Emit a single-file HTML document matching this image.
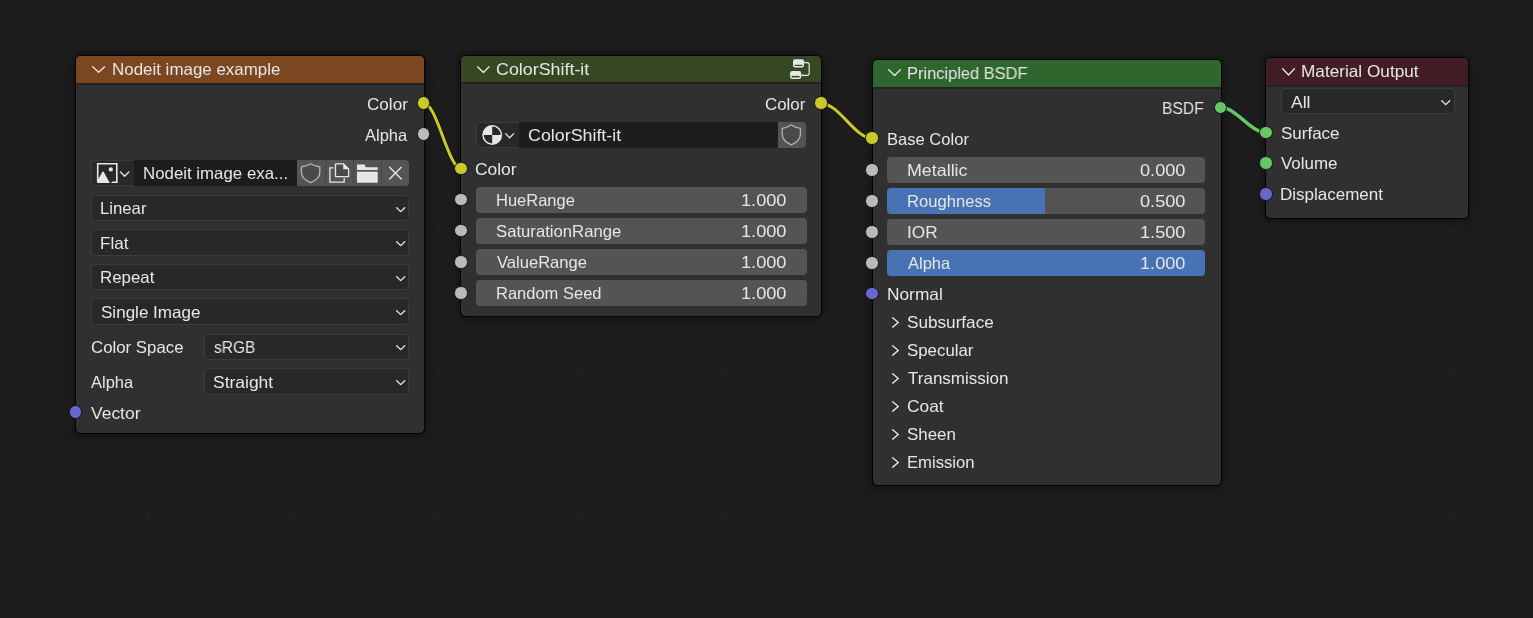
<!DOCTYPE html>
<html><head><meta charset="utf-8"><style>
html,body{margin:0;padding:0;width:1533px;height:618px;overflow:hidden;background:#1d1d1d;font-family:"Liberation Sans", sans-serif;}
.node{position:absolute;background:#303030;border-radius:4.5px;box-shadow:0 0 0 1px rgba(0,0,0,0.75),0 0 3px 1px rgba(0,0,0,0.35),0 1px 12px 3px rgba(0,0,0,0.28);overflow:hidden;}
.hdr{position:absolute;left:0;top:0;right:0;}
.sep{position:absolute;left:0;right:0;height:2px;background:#232323;}
.t{position:absolute;white-space:pre;line-height:20px;height:20px;font-size:16.5px;transform-origin:0 0;will-change:transform;}
.ic{position:absolute;overflow:visible;}
.sock{position:absolute;border-radius:50%;border:1px solid #141414;}
.bx,.dd,.sl{position:absolute;}
.dd{box-shadow:inset 0 0 0 1px #3c3c3c;}
.links{position:absolute;left:0;top:0;}
.dot{position:absolute;width:3px;height:3px;background:#232323;border-radius:1px;}
</style></head><body>
<div class="dot" style="left:147.2px;top:82.5px"></div><div class="dot" style="left:147.2px;top:226.9px"></div><div class="dot" style="left:147.2px;top:371.3px"></div><div class="dot" style="left:147.2px;top:515.7px"></div><div class="dot" style="left:291.7px;top:82.5px"></div><div class="dot" style="left:291.7px;top:226.9px"></div><div class="dot" style="left:291.7px;top:371.3px"></div><div class="dot" style="left:291.7px;top:515.7px"></div><div class="dot" style="left:436.2px;top:82.5px"></div><div class="dot" style="left:436.2px;top:226.9px"></div><div class="dot" style="left:436.2px;top:371.3px"></div><div class="dot" style="left:436.2px;top:515.7px"></div><div class="dot" style="left:580.7px;top:82.5px"></div><div class="dot" style="left:580.7px;top:226.9px"></div><div class="dot" style="left:580.7px;top:371.3px"></div><div class="dot" style="left:580.7px;top:515.7px"></div><div class="dot" style="left:725.2px;top:82.5px"></div><div class="dot" style="left:725.2px;top:226.9px"></div><div class="dot" style="left:725.2px;top:371.3px"></div><div class="dot" style="left:725.2px;top:515.7px"></div><div class="dot" style="left:869.7px;top:82.5px"></div><div class="dot" style="left:869.7px;top:226.9px"></div><div class="dot" style="left:869.7px;top:371.3px"></div><div class="dot" style="left:869.7px;top:515.7px"></div><div class="dot" style="left:1014.2px;top:82.5px"></div><div class="dot" style="left:1014.2px;top:226.9px"></div><div class="dot" style="left:1014.2px;top:371.3px"></div><div class="dot" style="left:1014.2px;top:515.7px"></div><div class="dot" style="left:1158.7px;top:82.5px"></div><div class="dot" style="left:1158.7px;top:226.9px"></div><div class="dot" style="left:1158.7px;top:371.3px"></div><div class="dot" style="left:1158.7px;top:515.7px"></div><div class="dot" style="left:1303.2px;top:82.5px"></div><div class="dot" style="left:1303.2px;top:226.9px"></div><div class="dot" style="left:1303.2px;top:371.3px"></div><div class="dot" style="left:1303.2px;top:515.7px"></div><div class="dot" style="left:1447.7px;top:82.5px"></div><div class="dot" style="left:1447.7px;top:226.9px"></div><div class="dot" style="left:1447.7px;top:371.3px"></div><div class="dot" style="left:1447.7px;top:515.7px"></div>
<div class="node" style="left:75.8px;top:55.6px;width:348.20px;height:377.80px"><div class="hdr" style="height:27.40px;background:#7b4720"></div><div class="sep" style="top:27.40px"></div></div><div class="node" style="left:461.2px;top:55.8px;width:360.10px;height:259.90px"><div class="hdr" style="height:26.60px;background:#364823"></div><div class="sep" style="top:26.60px"></div></div><div class="node" style="left:872.5px;top:59.7px;width:348.50px;height:425.30px"><div class="hdr" style="height:27.30px;background:#2e662e"></div><div class="sep" style="top:27.30px"></div></div><div class="node" style="left:1266.2px;top:57.6px;width:201.50px;height:160.60px"><div class="hdr" style="height:27.40px;background:#421d26"></div><div class="sep" style="top:27.40px"></div></div>
<svg class="links" width="1533" height="618"><path d="M424 103.4 C437.02 103.4 448.18 168.6 461.2 168.6" fill="none" stroke="#161616" stroke-width="5" stroke-linecap="round"/><path d="M424 103.4 C437.02 103.4 448.18 168.6 461.2 168.6" fill="none" stroke="#c9c92c" stroke-width="3" stroke-linecap="round"/><path d="M821.3 103.4 C839.18 103.4 854.51 138.3 872.4 138.3" fill="none" stroke="#161616" stroke-width="5" stroke-linecap="round"/><path d="M821.3 103.4 C839.18 103.4 854.51 138.3 872.4 138.3" fill="none" stroke="#c9c92c" stroke-width="3" stroke-linecap="round"/><path d="M1220.8 107.6 C1236.69 107.6 1250.31 132.7 1266.2 132.7" fill="none" stroke="#161616" stroke-width="5.5" stroke-linecap="round"/><path d="M1220.8 107.6 C1236.69 107.6 1250.31 132.7 1266.2 132.7" fill="none" stroke="#63c763" stroke-width="3.5" stroke-linecap="round"/></svg>
<svg class="ic" style="left:89.7px;top:63.900000000000006px" width="17.30" height="10.90"><path d="M2.67 2.67 L8.65 8.22 L14.62 2.67" fill="none" stroke="#e6e6e6" stroke-width="1.35" stroke-linecap="round" stroke-linejoin="round"/></svg><div class="t" style="left:111.61px;top:59.00px;transform:scaleX(1.0257);color:#e6e6e6">Nodeit image example</div><div class="t" style="left:367.29px;top:93.90px;transform:scaleX(1.0363);color:#e6e6e6">Color</div><div class="t" style="left:365.25px;top:125.10px;transform:scaleX(0.9890);color:#e6e6e6">Alpha</div><div class="sock" style="left:416.90px;top:96.30px;width:11.6px;height:11.6px;background:#c9c92c;border-width:1.3px"></div><div class="sock" style="left:416.90px;top:127.30px;width:11.6px;height:11.6px;background:#bababa;border-width:1.3px"></div><div class="dd" style="left:91px;top:160px;width:318.00px;height:26.00px;background:#282828;border-radius:4px;"></div><div class="bx" style="left:134px;top:160px;width:163.00px;height:26.00px;background:#1d1d1d;border-radius:0;"></div><div class="bx" style="left:297px;top:160px;width:112.00px;height:26.00px;background:#545454;border-radius:0 4px 4px 0;"></div><div class="bx" style="left:325.0px;top:160px;width:1.00px;height:26.00px;background:#474747;border-radius:0;"></div><div class="bx" style="left:353.1px;top:160px;width:1.00px;height:26.00px;background:#474747;border-radius:0;"></div><div class="bx" style="left:380.9px;top:160px;width:1.00px;height:26.00px;background:#474747;border-radius:0;"></div><div class="t" style="left:143.42px;top:162.90px;transform:scaleX(1.0205);color:#e6e6e6">Nodeit image exa...</div><div class="dd" style="left:91px;top:194.8px;width:318.00px;height:26.40px;background:#282828;border-radius:4px;"></div><div class="t" style="left:100.18px;top:197.80px;transform:scaleX(1.0134);color:#e6e6e6">Linear</div><svg class="ic" style="left:393.8px;top:204.5px" width="13.40" height="9.30"><path d="M2.67 2.67 L6.70 6.63 L10.72 2.67" fill="none" stroke="#e6e6e6" stroke-width="1.35" stroke-linecap="round" stroke-linejoin="round"/></svg><div class="dd" style="left:91px;top:229.4px;width:318.00px;height:26.50px;background:#282828;border-radius:4px;"></div><div class="t" style="left:100.15px;top:232.60px;transform:scaleX(1.0370);color:#e6e6e6">Flat</div><svg class="ic" style="left:393.8px;top:239.15px" width="13.40" height="9.30"><path d="M2.67 2.67 L6.70 6.63 L10.72 2.67" fill="none" stroke="#e6e6e6" stroke-width="1.35" stroke-linecap="round" stroke-linejoin="round"/></svg><div class="dd" style="left:91px;top:263.9px;width:318.00px;height:26.40px;background:#282828;border-radius:4px;"></div><div class="t" style="left:100.17px;top:266.60px;transform:scaleX(1.0217);color:#e6e6e6">Repeat</div><svg class="ic" style="left:393.8px;top:273.6px" width="13.40" height="9.30"><path d="M2.67 2.67 L6.70 6.63 L10.72 2.67" fill="none" stroke="#e6e6e6" stroke-width="1.35" stroke-linecap="round" stroke-linejoin="round"/></svg><div class="dd" style="left:91px;top:298.4px;width:318.00px;height:26.40px;background:#282828;border-radius:4px;"></div><div class="t" style="left:100.66px;top:301.70px;transform:scaleX(1.0331);color:#e6e6e6">Single Image</div><svg class="ic" style="left:393.8px;top:308.1px" width="13.40" height="9.30"><path d="M2.67 2.67 L6.70 6.63 L10.72 2.67" fill="none" stroke="#e6e6e6" stroke-width="1.35" stroke-linecap="round" stroke-linejoin="round"/></svg><div class="t" style="left:90.61px;top:336.80px;transform:scaleX(1.0187);color:#e6e6e6">Color Space</div><div class="dd" style="left:203.8px;top:333.6px;width:205.20px;height:26.40px;background:#282828;border-radius:4px;"></div><div class="t" style="left:213.65px;top:336.80px;transform:scaleX(0.9386);color:#e6e6e6">sRGB</div><svg class="ic" style="left:393.8px;top:343.3px" width="13.40" height="9.30"><path d="M2.67 2.67 L6.70 6.63 L10.72 2.67" fill="none" stroke="#e6e6e6" stroke-width="1.35" stroke-linecap="round" stroke-linejoin="round"/></svg><div class="t" style="left:91.45px;top:371.50px;transform:scaleX(0.9914);color:#e6e6e6">Alpha</div><div class="dd" style="left:203.8px;top:368.3px;width:205.20px;height:26.40px;background:#282828;border-radius:4px;"></div><div class="t" style="left:213.13px;top:371.50px;transform:scaleX(1.0585);color:#e6e6e6">Straight</div><svg class="ic" style="left:393.8px;top:378.0px" width="13.40" height="9.30"><path d="M2.67 2.67 L6.70 6.63 L10.72 2.67" fill="none" stroke="#e6e6e6" stroke-width="1.35" stroke-linecap="round" stroke-linejoin="round"/></svg><div class="t" style="left:91.39px;top:402.90px;transform:scaleX(1.0579);color:#e6e6e6">Vector</div><div class="sock" style="left:68.90px;top:405.10px;width:11.6px;height:11.6px;background:#6666cc;border-width:1.3px"></div><svg class="ic" style="left:474.8px;top:63.7px" width="16.80" height="11.20"><path d="M2.67 2.67 L8.40 8.53 L14.13 2.67" fill="none" stroke="#e6e6e6" stroke-width="1.35" stroke-linecap="round" stroke-linejoin="round"/></svg><div class="t" style="left:496.24px;top:59.10px;transform:scaleX(1.0823);color:#e6e6e6">ColorShift-it</div><div class="t" style="left:764.60px;top:93.80px;transform:scaleX(1.0232);color:#e6e6e6">Color</div><div class="sock" style="left:814.20px;top:96.30px;width:11.6px;height:11.6px;background:#c9c92c;border-width:1.3px"></div><div class="dd" style="left:475.7px;top:121.7px;width:330.40px;height:26.50px;background:#282828;border-radius:4px;"></div><div class="bx" style="left:519px;top:121.7px;width:259.20px;height:26.50px;background:#1d1d1d;border-radius:0;"></div><div class="bx" style="left:778.2px;top:121.7px;width:27.90px;height:26.50px;background:#545454;border-radius:0 4px 4px 0;"></div><div class="t" style="left:528.24px;top:124.60px;transform:scaleX(1.0812);color:#e6e6e6">ColorShift-it</div><div class="t" style="left:475.27px;top:158.90px;transform:scaleX(1.0546);color:#e6e6e6">Color</div><div class="sock" style="left:454.10px;top:161.50px;width:11.6px;height:11.6px;background:#c9c92c;border-width:1.3px"></div><div class="sl" style="left:475.7px;top:186.8px;width:331.10px;height:26.00px;background:#545454;border-radius:4px;"></div><div class="t" style="left:496.05px;top:189.60px;color:#e6e6e6">HueRange</div><div class="t" style="left:741.42px;top:189.60px;transform:scaleX(1.1013);color:#e6e6e6">1.000</div><div class="sock" style="left:454.10px;top:192.70px;width:11.6px;height:11.6px;background:#bababa;border-width:1.3px"></div><div class="sl" style="left:475.7px;top:218.0px;width:331.10px;height:26.00px;background:#545454;border-radius:4px;"></div><div class="t" style="left:496.28px;top:220.60px;transform:scaleX(1.0119);color:#e6e6e6">SaturationRange</div><div class="t" style="left:741.42px;top:220.60px;transform:scaleX(1.1013);color:#e6e6e6">1.000</div><div class="sock" style="left:454.10px;top:223.90px;width:11.6px;height:11.6px;background:#bababa;border-width:1.3px"></div><div class="sl" style="left:475.7px;top:249.1px;width:331.10px;height:26.00px;background:#545454;border-radius:4px;"></div><div class="t" style="left:497.11px;top:251.90px;transform:scaleX(1.0043);color:#e6e6e6">ValueRange</div><div class="t" style="left:741.42px;top:251.90px;transform:scaleX(1.1013);color:#e6e6e6">1.000</div><div class="sock" style="left:454.10px;top:255.00px;width:11.6px;height:11.6px;background:#bababa;border-width:1.3px"></div><div class="sl" style="left:475.7px;top:280.1px;width:331.10px;height:26.00px;background:#545454;border-radius:4px;"></div><div class="t" style="left:496.05px;top:282.70px;color:#e6e6e6">Random Seed</div><div class="t" style="left:741.42px;top:282.70px;transform:scaleX(1.1013);color:#e6e6e6">1.000</div><div class="sock" style="left:454.10px;top:286.00px;width:11.6px;height:11.6px;background:#bababa;border-width:1.3px"></div><svg class="ic" style="left:885.8px;top:67.0px" width="17.10" height="11.20"><path d="M2.67 2.67 L8.55 8.53 L14.43 2.67" fill="none" stroke="#e6e6e6" stroke-width="1.35" stroke-linecap="round" stroke-linejoin="round"/></svg><div class="t" style="left:907.35px;top:63.00px;transform:scaleX(0.9956);color:#e6e6e6">Principled BSDF</div><div class="t" style="left:1162.22px;top:98.10px;transform:scaleX(0.9473);color:#e6e6e6">BSDF</div><div class="sock" style="left:1213.70px;top:100.50px;width:11.6px;height:11.6px;background:#63c763;border-width:1.3px"></div><div class="t" style="left:886.74px;top:129.40px;transform:scaleX(1.0043);color:#e6e6e6">Base Color</div><div class="sock" style="left:865.30px;top:131.20px;width:11.6px;height:11.6px;background:#c9c92c;border-width:1.3px"></div><div class="sl" style="left:887px;top:157.1px;width:318.20px;height:26.00px;background:#545454;border-radius:4px;"></div><div class="t" style="left:907.04px;top:160.10px;transform:scaleX(1.0813);color:#e6e6e6">Metallic</div><div class="t" style="left:1140.23px;top:160.10px;transform:scaleX(1.1012);color:#e6e6e6">0.000</div><div class="sock" style="left:865.30px;top:163.00px;width:11.6px;height:11.6px;background:#bababa;border-width:1.3px"></div><div class="sl" style="left:887px;top:188.1px;width:318.20px;height:26.00px;background:#545454;border-radius:4px;"></div><div class="sl" style="left:887px;top:188.1px;width:157.99px;height:26.00px;background:#4772b3;border-radius:4px 0 0 4px;"></div><div class="t" style="left:907.14px;top:191.10px;transform:scaleX(1.0070);color:#e6e6e6">Roughness</div><div class="t" style="left:1140.23px;top:191.10px;transform:scaleX(1.1012);color:#e6e6e6">0.500</div><div class="sock" style="left:865.30px;top:194.00px;width:11.6px;height:11.6px;background:#bababa;border-width:1.3px"></div><div class="sl" style="left:887px;top:219.1px;width:318.20px;height:26.00px;background:#545454;border-radius:4px;"></div><div class="t" style="left:906.96px;top:222.10px;transform:scaleX(1.0440);color:#e6e6e6">IOR</div><div class="t" style="left:1140.22px;top:222.10px;transform:scaleX(1.1013);color:#e6e6e6">1.500</div><div class="sock" style="left:865.30px;top:225.00px;width:11.6px;height:11.6px;background:#bababa;border-width:1.3px"></div><div class="sl" style="left:887px;top:250.1px;width:318.20px;height:26.00px;background:#545454;border-radius:4px;"></div><div class="sl" style="left:887px;top:250.1px;width:318.20px;height:26.00px;background:#4772b3;border-radius:4px;"></div><div class="t" style="left:908.24px;top:253.10px;color:#e6e6e6">Alpha</div><div class="t" style="left:1140.22px;top:253.10px;transform:scaleX(1.1013);color:#e6e6e6">1.000</div><div class="sock" style="left:865.30px;top:256.00px;width:11.6px;height:11.6px;background:#bababa;border-width:1.3px"></div><div class="t" style="left:886.78px;top:284.20px;transform:scaleX(1.0488);color:#e6e6e6">Normal</div><div class="sock" style="left:865.30px;top:286.90px;width:11.6px;height:11.6px;background:#6666cc;border-width:1.3px"></div><div class="t" style="left:907.15px;top:311.60px;transform:scaleX(1.0396);color:#e6e6e6">Subsurface</div><svg class="ic" style="left:890.2px;top:315.0px" width="11.00" height="14.80"><path d="M2.67 2.67 L8.32 7.40 L2.67 12.13" fill="none" stroke="#e6e6e6" stroke-width="1.35" stroke-linecap="round" stroke-linejoin="round"/></svg><div class="t" style="left:907.18px;top:339.62px;transform:scaleX(1.0205);color:#e6e6e6">Specular</div><svg class="ic" style="left:890.2px;top:343.02px" width="11.00" height="14.80"><path d="M2.67 2.67 L8.32 7.40 L2.67 12.13" fill="none" stroke="#e6e6e6" stroke-width="1.35" stroke-linecap="round" stroke-linejoin="round"/></svg><div class="t" style="left:907.93px;top:367.64px;transform:scaleX(1.0308);color:#e6e6e6">Transmission</div><svg class="ic" style="left:890.2px;top:371.04px" width="11.00" height="14.80"><path d="M2.67 2.67 L8.32 7.40 L2.67 12.13" fill="none" stroke="#e6e6e6" stroke-width="1.35" stroke-linecap="round" stroke-linejoin="round"/></svg><div class="t" style="left:907.17px;top:395.66px;transform:scaleX(1.0511);color:#e6e6e6">Coat</div><svg class="ic" style="left:890.2px;top:399.06px" width="11.00" height="14.80"><path d="M2.67 2.67 L8.32 7.40 L2.67 12.13" fill="none" stroke="#e6e6e6" stroke-width="1.35" stroke-linecap="round" stroke-linejoin="round"/></svg><div class="t" style="left:907.17px;top:423.68px;transform:scaleX(1.0238);color:#e6e6e6">Sheen</div><svg class="ic" style="left:890.2px;top:427.08px" width="11.00" height="14.80"><path d="M2.67 2.67 L8.32 7.40 L2.67 12.13" fill="none" stroke="#e6e6e6" stroke-width="1.35" stroke-linecap="round" stroke-linejoin="round"/></svg><div class="t" style="left:906.93px;top:451.70px;transform:scaleX(1.0090);color:#e6e6e6">Emission</div><svg class="ic" style="left:890.2px;top:455.1px" width="11.00" height="14.80"><path d="M2.67 2.67 L8.32 7.40 L2.67 12.13" fill="none" stroke="#e6e6e6" stroke-width="1.35" stroke-linecap="round" stroke-linejoin="round"/></svg><svg class="ic" style="left:1279.7px;top:65.5px" width="17.10" height="11.70"><path d="M2.67 2.67 L8.55 9.03 L14.42 2.67" fill="none" stroke="#e6e6e6" stroke-width="1.35" stroke-linecap="round" stroke-linejoin="round"/></svg><div class="t" style="left:1301.19px;top:60.50px;transform:scaleX(1.0422);color:#e6e6e6">Material Output</div><div class="dd" style="left:1281px;top:88.3px;width:173.60px;height:26.10px;background:#282828;border-radius:4px;"></div><div class="t" style="left:1291.23px;top:91.80px;transform:scaleX(1.0630);color:#e6e6e6">All</div><svg class="ic" style="left:1439.3999999999999px;top:97.85px" width="13.40" height="9.30"><path d="M2.67 2.67 L6.70 6.62 L10.73 2.67" fill="none" stroke="#e6e6e6" stroke-width="1.35" stroke-linecap="round" stroke-linejoin="round"/></svg><div class="t" style="left:1280.57px;top:122.70px;transform:scaleX(1.0299);color:#e6e6e6">Surface</div><div class="sock" style="left:1259.10px;top:125.60px;width:11.6px;height:11.6px;background:#63c763;border-width:1.3px"></div><div class="t" style="left:1281.40px;top:153.30px;transform:scaleX(1.0267);color:#e6e6e6">Volume</div><div class="sock" style="left:1259.10px;top:156.10px;width:11.6px;height:11.6px;background:#63c763;border-width:1.3px"></div><div class="t" style="left:1280.31px;top:184.40px;transform:scaleX(1.0305);color:#e6e6e6">Displacement</div><div class="sock" style="left:1259.10px;top:187.40px;width:11.6px;height:11.6px;background:#6666cc;border-width:1.3px"></div><svg class="ic" style="left:94px;top:160px" width="40" height="26" viewBox="94 160 40 26"><path d="M103.2 171.8 L97.7 182.2 L97.7 163.7 L116.8 163.7 L116.8 182.2 L111.6 182.2" fill="none" stroke="#e6e6e6" stroke-width="1.6" stroke-linejoin="miter"/><path d="M97.2 182.9 L103.4 171.2 L109.8 182.9 Z" fill="#e6e6e6"/><circle cx="110.8" cy="169.4" r="2.1" fill="#e6e6e6"/><path d="M120.5 172 L124.6 176.2 L128.8 172" fill="none" stroke="#e6e6e6" stroke-width="1.3" stroke-linecap="round" stroke-linejoin="round"/></svg><svg class="ic" style="left:297px;top:160px" width="112" height="26" viewBox="297 160 112 26"><path d="M310.6 163.8 C315.20000000000005 166.43200000000002 317.96000000000004 166.80800000000002 319.8 166.996 L319.8 172.26000000000002 C319.8 177.336 315.20000000000005 180.72000000000003 310.6 182.60000000000002 C306.0 180.72000000000003 301.40000000000003 177.336 301.40000000000003 172.26000000000002 L301.40000000000003 166.996 C303.24 166.80800000000002 306.0 166.43200000000002 310.6 163.8 Z" fill="#4a4a4a" stroke="#b4b4b4" stroke-width="1.3" stroke-linejoin="round"/><path d="M333.5 167.9 L329.9 167.9 L329.9 182.1 L344.2 182.1 L344.2 178" fill="none" stroke="#e6e6e6" stroke-width="1.3"/><path d="M335.5 163.9 L343.6 163.9 L348.6 168.9 L348.6 176.6 L335.5 176.6 Z" fill="#4a4a4a" stroke="#e6e6e6" stroke-width="1.3" stroke-linejoin="round"/><path d="M343.2 163.5 L349 169.3 L343.2 169.3 Z" fill="#e6e6e6"/><path d="M357 164.4 L364.6 164.4 L365.6 167.2 L377.7 167.2 L377.7 170.1 L357 170.1 Z" fill="#e6e6e6"/><rect x="357" y="171.7" width="20.7" height="11" fill="#e6e6e6"/><path d="M389.6 167.3 L401.3 179 M401.3 167.3 L389.6 179" fill="none" stroke="#e6e6e6" stroke-width="1.4" stroke-linecap="round"/></svg><svg class="ic" style="left:478px;top:121px" width="42" height="28" viewBox="478 121 42 28"><circle cx="492.2" cy="135" r="9.2" fill="#282828" stroke="#e6e6e6" stroke-width="1.5"/><path d="M492.2 135 L492.2 125.8 A9.2 9.2 0 0 0 483 135 Z" fill="#e6e6e6"/><path d="M492.2 135 L492.2 144.2 A9.2 9.2 0 0 0 501.4 135 Z" fill="#e6e6e6"/><path d="M505.6 133.6 L509.6 137.7 L513.7 133.6" fill="none" stroke="#e6e6e6" stroke-width="1.3" stroke-linecap="round" stroke-linejoin="round"/></svg><svg class="ic" style="left:778px;top:121px" width="29" height="28" viewBox="778 121 29 28"><path d="M791.3 125 C795.8499999999999 127.772 798.5799999999999 128.168 800.4 128.366 L800.4 133.91 C800.4 139.256 795.8499999999999 142.82 791.3 144.8 C786.75 142.82 782.1999999999999 139.256 782.1999999999999 133.91 L782.1999999999999 128.366 C784.02 128.168 786.75 127.772 791.3 125 Z" fill="#4a4a4a" stroke="#b4b4b4" stroke-width="1.3" stroke-linejoin="round"/></svg><svg class="ic" style="left:786px;top:56px" width="28" height="26" viewBox="786 56 28 26"><rect x="793" y="59.3" width="11" height="8.2" rx="2" fill="#e6e6e6"/><rect x="794.5" y="64.8" width="8" height="1.2" fill="#364823"/><rect x="790.1" y="70.9" width="11" height="8" rx="2" fill="#e6e6e6"/><rect x="791.6" y="75.9" width="8" height="1.6" fill="#364823"/><path d="M805 62.6 L807 62.6 Q809.2 62.6 809.2 64.8 L809.2 73.2 Q809.2 75.3 807 75.3 L802 75.3" fill="none" stroke="#e6e6e6" stroke-width="1.2"/><path d="M804.3 61.2 L806.2 62.6 L804.3 64 Z M801.6 73.8 L803.6 75.3 L801.6 76.8 Z" fill="#e6e6e6"/></svg>
</body></html>
